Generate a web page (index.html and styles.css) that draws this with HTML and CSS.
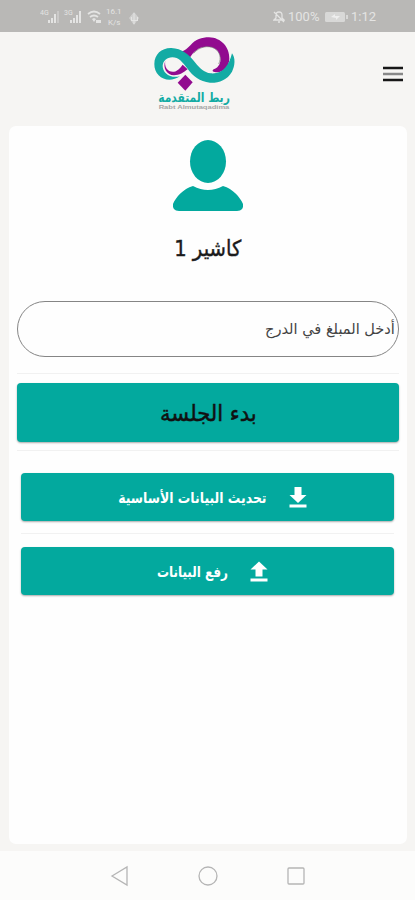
FILE: index.html
```html
<!DOCTYPE html>
<html lang="ar" dir="rtl">
<head>
<meta charset="utf-8">
<meta name="viewport" content="width=device-width, initial-scale=1">
<title>كاشير 1</title>
<link rel="stylesheet" href="styles.css">
</head>
<body>
<div class="status" dir="ltr">
  <div class="status-left">
    <svg width="100" height="26" viewBox="0 0 100 26" fill="#e4e4e3">
      <text x="0" y="12" font-size="7">4G</text>
      <path d="M8 17h2v3H8zM11 15h2v5h-2zM14 11h2v9h-2z"/><path opacity=".4" d="M17 8h2v12h-2z"/>
      <text x="24" y="12" font-size="7">3G</text>
      <path d="M30 17h2v3h-2zM33 15h2v5h-2zM36 12h2v8h-2zM39 8h2v12h-2z"/>
      <path d="M48 11q6-5 12 0M50 14q4-3 8 0" fill="none" stroke="#e4e4e3" stroke-width="1.8"/><path d="M52 16l2-1 2 1-2 3zM56 17h5v3h-5z"/>
      <text x="66" y="11" font-size="8">16.1</text><text x="68" y="22" font-size="8">K/s</text>
      <path d="M94 9l5 6-5 7-5-7z" opacity=".55"/><path d="M93.500 10h1v11h-1zM91 14h1v3h5v-3h1v4h-7z"/>
    </svg>
  </div>
  <div class="status-right">
    <svg width="12" height="14" viewBox="0 0 12 14" fill="none" stroke="#e4e4e3" stroke-width="1.300"><path d="M1 10h10L9 8V5Q9 2 6 2T3 5v3zM5 12h2M1 2l10 10"/></svg>
    <span class="percent">100%</span>
    <svg width="24" height="12" viewBox="0 0 24 12"><rect y="1" width="20" height="10" rx="1.500" fill="#d8d8d7"/><path d="M21 4h2v4h-2z" fill="#d8d8d7"/><path d="M6 6l4-3v2h5L11 9V7z" fill="#eee"/></svg>
    <span class="clock">1:12</span>
  </div>
</div>
<header class="header">
  <svg class="logo" width="100" height="82" viewBox="0 0 300 246">
    <path d="M107 60C120 56 127 49 137 39C152 22 170 16 192 16C229 17 254 46 253 80C252 106 234 124 209 120C200 119 202 113 208 111C222 105 228 91 226 77C223 52 205 43 183 44C160 46 146 58 134 78Z" fill="#920b8f"/>
    <path d="M146 64C162 44 190 39 208 49C225 59 230 79 221 96" fill="none" stroke="#777" stroke-width="2"/>
    <path d="M61 86C57 104 68 121 87 119C99 117 105 108 113 98L128 112C116 121 103 130 87 130C66 129 52 108 61 86Z" fill="#920b8f"/>
    <path d="M105 133C68 158 27 134 28 96C28 66 51 47 79 48C111 49 132 68 151 92C164 108 177 121 197 124C232 127 252 102 261 64C272 78 270 102 261 119C246 145 221 153 195 152C164 149 144 133 126 108C112 90 101 76 82 76C65 76 54 87 53 101C53 122 74 140 105 133Z" fill="#13aba4"/>
    <path d="M121 128L143 151L121 176L98 152Z" fill="#920b8f"/>
    <text class="logo-name" x="147" y="209" textLength="215" lengthAdjust="spacingAndGlyphs" text-anchor="middle" direction="rtl">ربط المتقدمة</text>
    <text class="logo-sub" x="147" y="232" textLength="212" lengthAdjust="spacingAndGlyphs" text-anchor="middle" direction="ltr">Rabt Almutaqadima</text>
  </svg>
  <svg class="menu" width="22" height="18" viewBox="0 0 22 18"><path d="M1 3h20M1 15h20" stroke="#171717" stroke-width="2.300"/><path d="M1 9h20" stroke="#888" stroke-width="2.500"/></svg>
</header>
<main class="card">
  <svg class="avatar" width="72" height="72" viewBox="0 0 72 72" fill="#03a99e"><ellipse cx="36" cy="21.500" rx="18" ry="21.500"/><path d="M21 46Q36 54 51 46C61 49 68 57 71 64Q72 71 65 71H7Q0 71 1 64C4 57 11 49 21 46Z"/></svg>
  <h1 class="title"><span class="fit t-title">كاشير 1</span></h1>
  <div class="field"><span class="fit t-field">أدخل المبلغ في الدرج</span></div>
  <hr class="rule">
  <button class="btn primary"><span class="fit t-start">بدء الجلسة</span></button>
  <hr class="rule second">
  <section class="actions">
    <button class="btn small"><svg width="22" height="24" viewBox="0 0 22 24" fill="#fff"><path d="M7.500 1h7v8h5L11 17 2.500 9h5zM2.500 18.500h17v3h-17z"/></svg><span class="fit t-update">تحديث البيانات الأساسية</span></button>
    <hr class="rule third">
    <button class="btn small"><svg width="22" height="24" viewBox="0 0 22 24" fill="#fff"><path d="M11 1.500l8.500 8h-5v7h-7v-7h-5zM2.500 18.500h17v3h-17z"/></svg><span class="fit t-upload">رفع البيانات</span></button>
  </section>
</main>
<nav class="nav" dir="ltr">
  <svg width="20" height="22" viewBox="0 0 20 22"><path d="M2 11L17 2v18z"/></svg>
  <svg width="22" height="22" viewBox="0 0 22 22"><circle cx="11" cy="11" r="9"/></svg>
  <svg width="20" height="22" viewBox="0 0 20 22"><rect x="2" y="3" width="16" height="16" rx="1"/></svg>
</nav>
</body>
</html>
```
FILE: styles.css
```css
* { box-sizing: border-box; }
body {
  margin: 0;
  width: 415px;
  height: 900px;
  display: flex;
  flex-direction: column;
  background: #f6f5f3;
  font-family: "DejaVu Sans", sans-serif;
  overflow: hidden;
}
.status {
  height: 32px;
  flex: none;
  display: flex;
  justify-content: space-between;
  padding: 3px 37px 0 40px;
  background: #b9b8b6;
  color: #e4e4e3;
  font-family: Roboto, sans-serif;
  font-size: 13px;
}
.status-right { display: flex; align-items: center; height: 27px; }
.percent { width: 34px; margin: 0 3px; }
.clock { width: 27px; margin-left: 2px; }
.header {
  height: 94px;
  flex: none;
  display: grid;
  grid-template-columns: 170px 100px 145px;
  grid-template-rows: 94px;
}
.logo { grid-column: 2; grid-row: 1; }
.menu { grid-column: 1; grid-row: 1; margin: 33px 11px 0 0; }
.logo-name { font: bold 39px "DejaVu Sans", sans-serif; fill: #13aba4; }
.logo-sub { font: bold 18px "Liberation Sans", sans-serif; fill: #a5a5a5; }
.card {
  width: 398px;
  height: 718px;
  flex: none;
  margin-right: 8px;
  padding: 14px 8px 0;
  border-radius: 7px;
  background: #fefefe;
  display: flex;
  flex-direction: column;
}
.avatar { align-self: center; flex: none; margin-right: 1px; }
.title {
  height: 40px;
  margin: 16px 0 0;
  display: flex;
  align-items: center;
  justify-content: center;
  font-weight: normal;
  color: #1b1b1b;
}
.fit { display: block; white-space: nowrap; }
.t-title { font-size: 22px; -webkit-text-stroke: .4px; transform: scaleX(.89); }
.field {
  height: 56px;
  margin-top: 33px;
  padding-right: 3px;
  display: flex;
  align-items: center;
  border: 1px solid #858585;
  border-radius: 28px;
  color: #444;
}
.t-field { font-size: 15px; transform: scaleX(.97); transform-origin: right; }
.rule { width: 100%; height: 1px; flex: none; margin: 16px 0 9px; border: 0; background: #f1f1f1; }
.btn {
  width: 100%;
  flex: none;
  padding: 0;
  display: flex;
  align-items: center;
  justify-content: center;
  border: 0;
  border-radius: 4px;
  background: #03a99e;
  box-shadow: 0 1px 2px #0005;
  font-family: inherit;
}
.primary { height: 59px; padding-top: 2px; color: #111; }
.t-start { font-size: 22px; -webkit-text-stroke: .5px; transform: scaleX(.96); }
.second { margin: 8px 0 22px; }
.actions { padding: 0 5px 0 4px; }
.small { height: 48px; padding: 1px 0 0 12px; gap: 21px; color: #fff; font-weight: bold; }
.t-update, .t-upload { font-size: 15px; }
.t-update { margin: 0 -15px; transform: scaleX(.83); }
.t-upload { margin: 0 -9px; transform: scaleX(.8); }
.third { margin: 12px 0 13px; }
.nav {
  flex: 1;
  margin-top: 7px;
  padding: 1px 109px 0 110px;
  display: flex;
  align-items: center;
  justify-content: space-between;
  background: #fcfcfb;
}
.nav svg { fill: none; stroke: #b5b5b5; stroke-width: 1.3; }
```
